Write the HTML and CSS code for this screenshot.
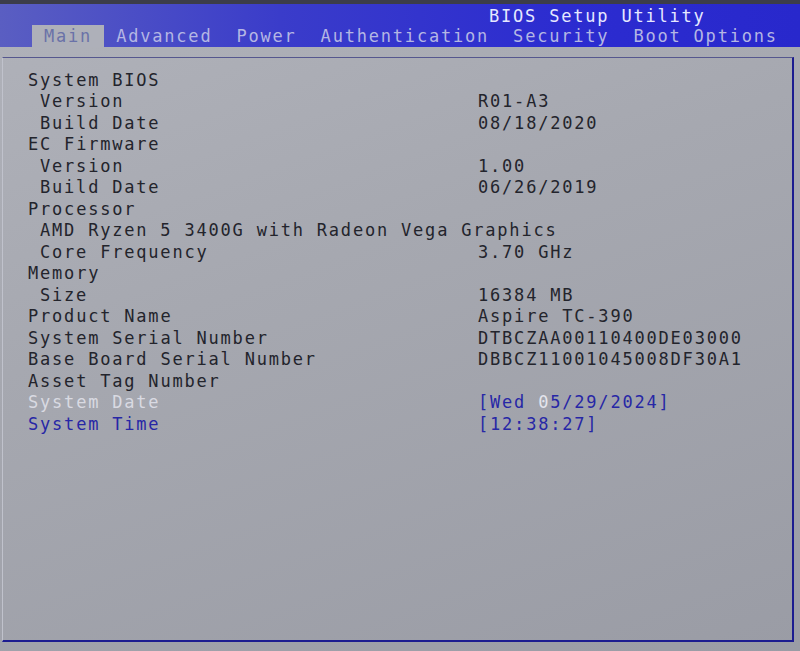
FILE: index.html
```html
<!DOCTYPE html>
<html>
<head>
<meta charset="utf-8">
<link rel="stylesheet" href="styles.css">
</head>
<body>
<div class="screen">
  <div class="topstrip"></div>
  <header class="header">
    <div class="title">BIOS Setup Utility</div>
    <nav class="tabs">
      <span class="tab active">Main</span>
      <span class="tab">Advanced</span>
      <span class="tab">Power</span>
      <span class="tab">Authentication</span>
      <span class="tab">Security</span>
      <span class="tab">Boot Options</span>
    </nav>
  </header>
  <div class="gap"></div>
  <main class="panel">
    <div class="rows">
      <div class="label">System BIOS</div><div class="value"></div>
      <div class="label sub">Version</div><div class="value">R01-A3</div>
      <div class="label sub">Build Date</div><div class="value">08/18/2020</div>
      <div class="label">EC Firmware</div><div class="value"></div>
      <div class="label sub">Version</div><div class="value">1.00</div>
      <div class="label sub">Build Date</div><div class="value">06/26/2019</div>
      <div class="label">Processor</div><div class="value"></div>
      <div class="label sub wide">AMD Ryzen 5 3400G with Radeon Vega Graphics</div>
      <div class="label sub">Core Frequency</div><div class="value">3.70 GHz</div>
      <div class="label">Memory</div><div class="value"></div>
      <div class="label sub">Size</div><div class="value">16384 MB</div>
      <div class="label">Product Name</div><div class="value">Aspire TC-390</div>
      <div class="label">System Serial Number</div><div class="value">DTBCZAA00110400DE03000</div>
      <div class="label">Base Board Serial Number</div><div class="value">DBBCZ11001045008DF30A1</div>
      <div class="label">Asset Tag Number</div><div class="value"></div>
      <div class="label selected">System Date</div><div class="value field">[Wed <span class="cursor">0</span>5/29/2024]</div>
      <div class="label editable">System Time</div><div class="value field">[12:38:27]</div>
    </div>
  </main>
</div>
</body>
</html>
```

FILE: styles.css
```css
html, body {
  margin: 0;
  padding: 0;
}

body {
  width: 800px;
  height: 651px;
  overflow: hidden;
  background: #9c9ea8;
  font-family: "DejaVu Sans Mono", "Liberation Mono", monospace;
  font-size: 17px;
  letter-spacing: 1.8px;
}

.screen {
  width: 800px;
  height: 651px;
  display: flex;
  flex-direction: column;
  background: linear-gradient(160deg, #b0b2ba 0%, #a6a8b0 40%, #9a9ca5 100%);
}

.topstrip {
  height: 4px;
  background: #3c3d4a;
}

.header {
  height: 43px;
  display: flex;
  flex-direction: column;
  background: linear-gradient(90deg, #5a5ec2 0%, #3a3cca 35%, #2c2cd0 70%, #2828cc 100%);
}

.title {
  height: 19px;
  padding-top: 2px;
  line-height: 20px;
  padding-left: 489px;
  color: #e6e8ff;
  white-space: nowrap;
}

.tabs {
  height: 22px;
  display: flex;
  padding-left: 32px;
  white-space: nowrap;
}

.tab {
  padding: 1px 12px 0;
  line-height: 21px;
  color: #b4b6e4;
}

.tab.active {
  background: #aeb0b9;
  color: #6a72a8;
}

.gap {
  height: 10px;
}

.panel {
  margin-left: 2px;
  width: 792px;
  height: 585px;
  border-top: 1px solid #55578e;
  border-left: 1px solid #c0c2cc;
  border-right: 2px solid #1c1c90;
  border-bottom: 2px solid #1c1c90;
  padding: 11.5px 0 0 25px;
  box-sizing: border-box;
}

.rows {
  display: grid;
  grid-template-columns: 450px 1fr;
  grid-auto-rows: 21.5px;
  line-height: 21.5px;
  color: #23242c;
  white-space: nowrap;
}

.label.sub {
  padding-left: 12px;
}

.label.wide {
  grid-column: 1 / 3;
}

.label.selected {
  color: #d9dae2;
}

.label.editable,
.value.field {
  color: #2727a6;
}

.cursor {
  color: #e4e5ec;
}
```
